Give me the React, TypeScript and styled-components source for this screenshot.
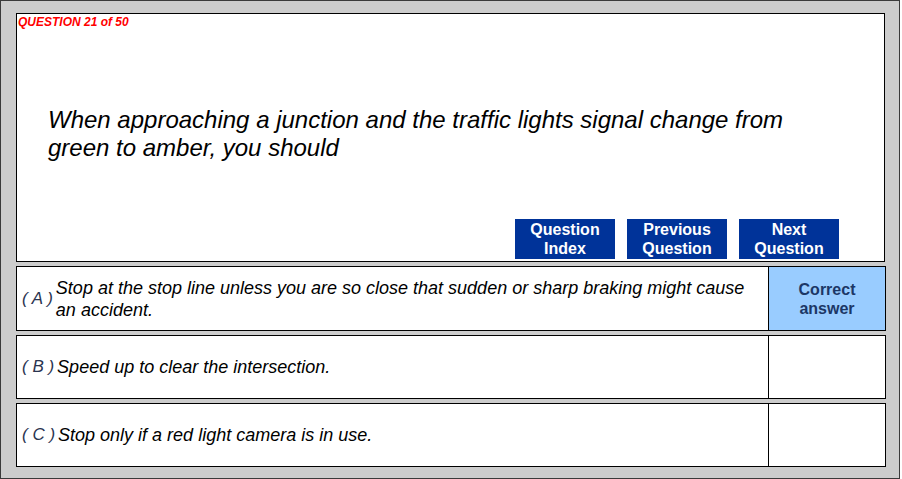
import styled, { createGlobalStyle } from "styled-components";

const GlobalStyle = createGlobalStyle`
  html, body {
    margin: 0;
    padding: 0;
    background: #ffffff;
  }
  * {
    box-sizing: border-box;
  }
`;

const Frame = styled.div`
  width: 900px;
  height: 479px;
  background-color: #cccccc;
  border: 1px solid #3a3a3a;
  padding: 12px 13px 11px 15px;
  display: flex;
  flex-direction: column;
  gap: 4px;
  font-family: "Liberation Sans", Arial, sans-serif;
`;

const QuestionBox = styled.div`
  width: 869px;
  height: 249px;
  background-color: #ffffff;
  border: 1px solid #000000;
  display: flex;
  flex-direction: column;
  padding: 1px 45px 2px 1px;
`;

const Counter = styled.span`
  color: #ff0000;
  font-size: 12px;
  font-weight: bold;
  font-style: italic;
  line-height: 14px;
`;

const QuestionText = styled.p`
  margin: 77px 0 0 30px;
  font-size: 24px;
  font-style: italic;
  line-height: 28px;
  color: #000000;
`;

const ButtonRow = styled.div`
  margin-top: auto;
  display: flex;
  justify-content: flex-end;
  gap: 12px;
`;

const NavButton = styled.button`
  width: 100px;
  height: 40px;
  background-color: #003399;
  color: #ffffff;
  border: none;
  padding: 0;
  font-family: "Liberation Sans", Arial, sans-serif;
  font-size: 16px;
  font-weight: bold;
  line-height: 19px;
  cursor: pointer;
`;

const OptionRow = styled.div<{ $tall?: boolean }>`
  width: 870px;
  height: ${(p) => (p.$tall ? 65 : 64)}px;
  background-color: #ffffff;
  border: 1px solid #000000;
  display: flex;
`;

const OptionBody = styled.div`
  flex: 1;
  display: flex;
  align-items: center;
  padding-left: 5px;
  padding-right: 12px;
`;

const OptionLabel = styled.span`
  color: #2a3450;
  font-size: 17px;
  font-style: italic;
  white-space: pre;
  margin-right: 3px;
`;

const OptionText = styled.span`
  color: #000000;
  font-size: 18px;
  font-style: italic;
  line-height: 22px;
`;

const AnswerCell = styled.div<{ $correct?: boolean }>`
  width: 117px;
  border-left: 1px solid #000000;
  background-color: ${(p) => (p.$correct ? "#99ccff" : "#ffffff")};
  display: flex;
  align-items: center;
  justify-content: center;
  text-align: center;
  color: #1c3766;
  font-size: 16px;
  font-weight: bold;
  line-height: 19px;
`;

const options = [
  {
    key: "A",
    text: "Stop at the stop line unless you are so close that sudden or sharp braking might cause an accident.",
    correct: true,
  },
  { key: "B", text: "Speed up to clear the intersection.", correct: false },
  { key: "C", text: "Stop only if a red light camera is in use.", correct: false },
];

function App() {
  return (
    <>
      <GlobalStyle />
      <Frame>
        <QuestionBox>
          <Counter>QUESTION 21 of 50</Counter>
          <QuestionText>
            When approaching a junction and the traffic lights signal change from
            <br />
            green to amber, you should
          </QuestionText>
          <ButtonRow>
            <NavButton>
              Question
              <br />
              Index
            </NavButton>
            <NavButton>
              Previous
              <br />
              Question
            </NavButton>
            <NavButton>
              Next
              <br />
              Question
            </NavButton>
          </ButtonRow>
        </QuestionBox>
        {options.map((o, i) => (
          <OptionRow key={o.key} $tall={i === 0}>
            <OptionBody>
              <OptionLabel>{`( ${o.key} )`}</OptionLabel>
              <OptionText>{o.text}</OptionText>
            </OptionBody>
            <AnswerCell $correct={o.correct}>
              {o.correct && (
                <>
                  Correct
                  <br />
                  answer
                </>
              )}
            </AnswerCell>
          </OptionRow>
        ))}
      </Frame>
    </>
  );
}

export default App;
